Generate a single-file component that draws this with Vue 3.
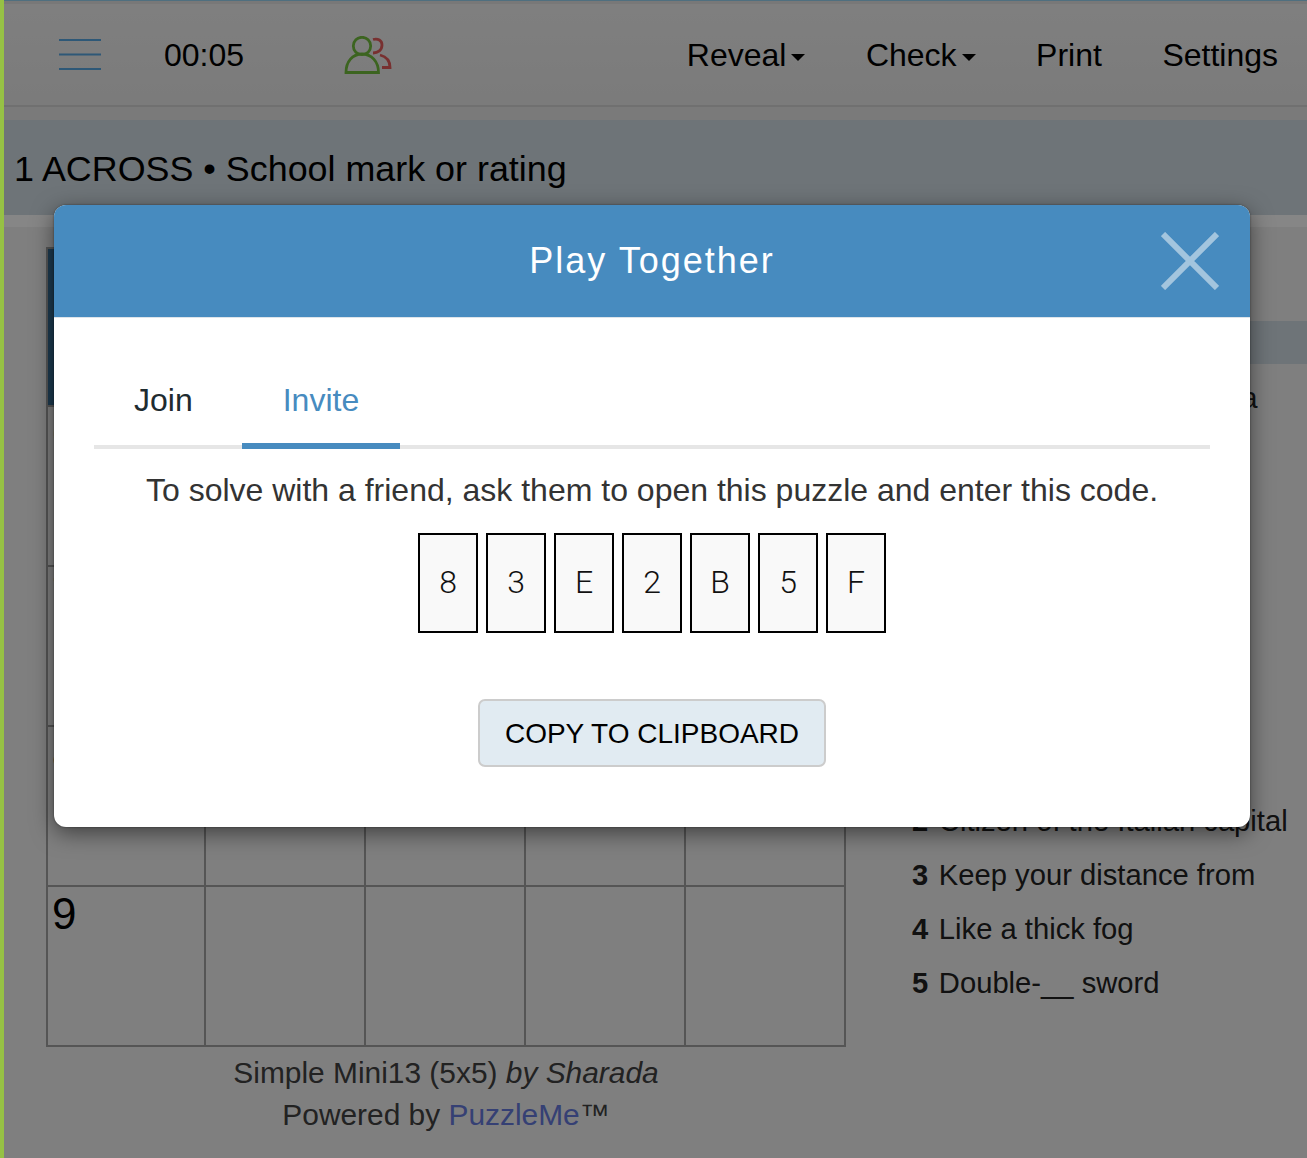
<script setup>
const code = ['8', '3', 'E', '2', 'B', '5', 'F']
const nums = ['', '', '', '', '', '6', '', '', '', '', '7', '', '', '', '', '8', '', '', '', '', '9', '', '', '', '']
const down = [
  ['2', 'Citizen of the Italian capital'],
  ['3', 'Keep your distance from'],
  ['4', 'Like a thick fog'],
  ['5', 'Double-__ sword']
]
</script>

<template>
  <div class="page">
    <header class="topbar">
      <svg class="burger" width="42" height="32" viewBox="0 0 42 32">
        <path d="M0 1h42M0 15.500h42M0 30h42" stroke="#5cb0ee" stroke-width="2" fill="none" />
      </svg>
      <span class="timer">00:05</span>
      <svg class="people" width="50" height="40" viewBox="0 0 50 40">
        <circle cx="18" cy="10" r="8.700" fill="none" stroke="#78c840" stroke-width="2.800" />
        <path d="M2 36.500c0-11 6.500-18.500 16-18.500s16.500 7.500 16.500 18.500z" fill="none" stroke="#78c840" stroke-width="2.800" />
        <path d="M29 3.500c5-1.500 9 1 9 5.500 0 5-4 8-9 8M36 19c6 1.500 10 6 10 12.500h-8" fill="none" stroke="#f06060" stroke-width="2.800" />
      </svg>
      <nav class="menu">
        <span class="item">Reveal<i class="caret"></i></span>
        <span class="item">Check<i class="caret"></i></span>
        <span class="item">Print</span>
        <span class="item">Settings</span>
      </nav>
    </header>
    <div class="gap-strip"></div>
    <div class="clue-bar">1 ACROSS • School mark or rating</div>
    <div class="under-strip"></div>

    <main class="board">
      <section class="puzzle">
        <div class="grid">
          <div v-for="(n, i) in nums" :key="i" class="cell" :class="{ sel: i === 0 }">
            <span class="num">{{ n }}</span>
          </div>
        </div>
        <p class="caption">Simple Mini13 (5x5) <em>by Sharada</em></p>
        <p class="caption">Powered by <a class="link">PuzzleMe</a>™</p>
      </section>
      <aside class="clues">
        <div class="band"></div>
        <p class="clue first"><b>1</b> School mark or rating <span class="tail">a</span></p>
        <p v-for="c in down" :key="c[0]" class="clue"><b>{{ c[0] }}</b> {{ c[1] }}</p>
      </aside>
    </main>

    <div class="overlay">
      <div class="modal">
        <div class="modal-head">
          <h2>Play Together</h2>
          <svg class="close" width="58" height="58" viewBox="0 0 58 58">
            <path d="M2 2l54 54M56 2L2 56" stroke="#a3c5de" stroke-width="6" fill="none" />
          </svg>
        </div>
        <div class="modal-body">
          <div class="tabs">
            <span class="tab">Join</span>
            <span class="tab active">Invite</span>
          </div>
          <p class="lead">To solve with a friend, ask them to open this puzzle and enter this code.</p>
          <div class="code">
            <span v-for="(c, i) in code" :key="i" class="box">{{ c }}</span>
          </div>
          <button class="copy">COPY TO CLIPBOARD</button>
        </div>
      </div>
    </div>
  </div>
</template>

<style>
html, body { margin: 0; background: #fff; overflow: hidden; }
</style>

<style scoped>
.page {
  position: relative;
  box-sizing: border-box;
  width: 1307px;
  height: 1158px;
  overflow: hidden;
  border-left: 4px solid #96c145;
  background: #fff;
  font-family: "Liberation Sans", Arial, sans-serif;
  color: #000;
}
.topbar {
  display: flex;
  align-items: center;
  box-sizing: border-box;
  height: 107px;
  padding: 4px 29px 0 55px;
  background: linear-gradient(#ffffff, #f6f6f6);
  border-top: 1px solid #9edfff;
  border-bottom: 2px solid #e0e0e0;
  box-shadow: inset 0 3px 0 #f0f0f0;
  font-size: 32px;
}
.burger { flex: none; }
.timer { margin-left: 63px; }
.people { margin-left: 100px; margin-top: 2px; flex: none; }
.menu { display: flex; gap: 60.500px; margin-left: auto; }
.item { display: inline-flex; align-items: center; }
.caret {
  display: inline-block;
  width: 0;
  height: 0;
  margin: 4px 0 0 5px;
  border-left: 7.500px solid transparent;
  border-right: 7.500px solid transparent;
  border-top: 7.500px solid #000;
}
.gap-strip { height: 13px; background: #f4f4f4; }
.clue-bar {
  box-sizing: border-box;
  height: 95px;
  padding: 28px 0 0 10px;
  background: #dce8f0;
  font-size: 35.870px;
  line-height: 42px;
  white-space: nowrap;
}
.under-strip { position: relative; z-index: 1; height: 12px; background: #868686; }
.board { display: flex; }
.puzzle { flex: none; width: 800px; margin-left: 42px; padding-top: 20px; }
.grid {
  display: grid;
  grid-template-columns: 158px repeat(4, 160px);
  grid-template-rows: 158px repeat(4, 160px);
  border-left: 2px solid #aaa;
  border-top: 2px solid #aaa;
}
.cell {
  box-sizing: border-box;
  border-right: 2px solid #aaa;
  border-bottom: 2px solid #aaa;
  padding: 0 0 0 4px;
}
.cell.sel { background: #3a749e; }
.num { font-size: 44px; line-height: 54px; }
.caption {
  margin: 0;
  text-align: center;
  color: #444;
  font-size: 29.900px;
  line-height: 42px;
}
.caption:first-of-type { margin-top: 5px; }
.link { color: #6a80e8; }
.clues { flex: 1; margin-left: 66px; padding-top: 94px; min-width: 0; color: #222; }
.band {
  height: 43px;
  margin-right: -10px;
  margin-left: -20px;
  background: #dce8f0;
}
.clue {
  margin: 0;
  font-size: 29.200px;
  line-height: 54px;
  white-space: nowrap;
}
.clue b { margin-right: 2.500px; }
.clue.first { height: 54px; margin-top: 7px; margin-bottom: 369px; }
.tail { margin-left: 17px; }
.overlay {
  position: absolute;
  inset: 0;
  background: rgba(0, 0, 0, 0.5);
}
.modal {
  position: absolute;
  z-index: 2;
  left: 50px;
  top: 205px;
  width: 1196px;
  height: 622px;
  background: #fff;
  border-radius: 12px;
  box-shadow: 0 0 2px rgba(0, 0, 0, 0.5), 0 6px 22px rgba(0, 0, 0, 0.5);
  overflow: hidden;
}
.modal-head {
  position: relative;
  display: flex;
  align-items: center;
  justify-content: center;
  box-sizing: border-box;
  height: 113px;
  background: #478bbf;
  border-bottom: 1px solid #dde4ea;
  color: #fff;
}
.modal-head h2 {
  margin: 0;
  font-size: 36px;
  font-weight: 400;
  letter-spacing: 2px;
}
.close { position: absolute; right: 31px; top: 27px; }
.modal-body {
  display: flex;
  flex-direction: column;
  align-items: center;
  padding: 0 40px;
}
.tabs {
  align-self: stretch;
  display: flex;
  gap: 9px;
  height: 131px;
  box-sizing: border-box;
  border-bottom: 4px solid #e6e6e6;
  font-size: 32px;
  color: #1e2b30;
}
.tab {
  padding: 0 40px;
  height: 131px;
  box-sizing: border-box;
  line-height: 164px;
}
.tab.active {
  padding: 0 41px;
  color: #478bbf;
  border-bottom: 6px solid #478bbf;
}
.lead {
  margin: 20px 0 0;
  font-size: 32px;
  line-height: 42px;
  color: #333;
}
.code { display: flex; gap: 8px; margin-top: 22px; }
.box {
  display: flex;
  align-items: center;
  justify-content: center;
  box-sizing: border-box;
  width: 60px;
  height: 100px;
  padding-bottom: 2px;
  border: 2px solid #000;
  background: #f9f9f9;
  font-family: Roboto, "Liberation Sans", sans-serif;
  font-weight: 300;
  font-size: 32px;
  color: #111;
}
.copy {
  margin-top: 66px;
  box-sizing: border-box;
  width: 348px;
  height: 68px;
  padding: 2px 0 0;
  border: 2px solid #ccc;
  border-radius: 7px;
  background: #e1ebf2;
  font-family: inherit;
  font-size: 28px;
  color: #000;
}
</style>
